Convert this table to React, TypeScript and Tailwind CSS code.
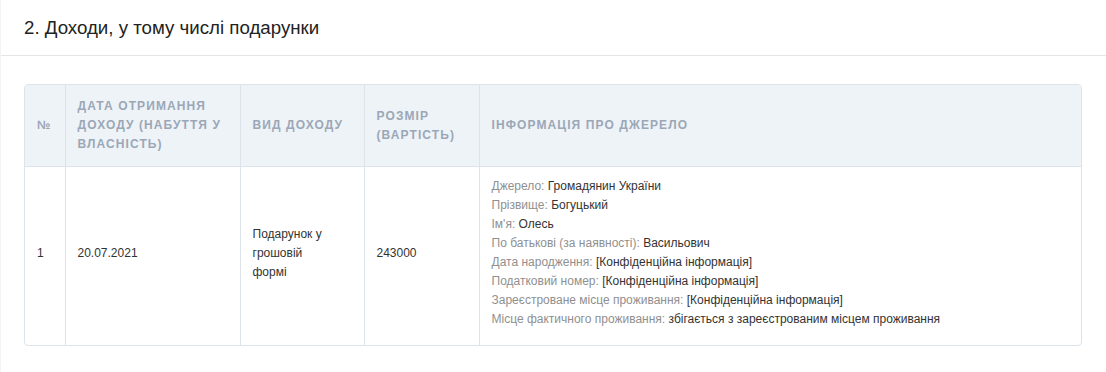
export default function App() {
  const info: [string, string][] = [
    ['Джерело', 'Громадянин України'],
    ['Прізвище', 'Богуцький'],
    ["Ім'я", 'Олесь'],
    ['По батькові (за наявності)', 'Васильович'],
    ['Дата народження', '[Конфіденційна інформація]'],
    ['Податковий номер', '[Конфіденційна інформація]'],
    ['Зареєстроване місце проживання', '[Конфіденційна інформація]'],
    ['Місце фактичного проживання', 'збігається з зареєстрованим місцем проживання'],
  ];

  const th = 'border-l border-[#dde3ea] px-3 pt-[12px] pb-[12px] text-left align-middle font-bold uppercase tracking-[1.1px] text-[12px] leading-[19px] text-[#9ba7b6] first:border-l-0';
  const td = 'border-l border-t border-[#dde3ea] px-3 pt-[10px] pb-[16px] align-middle text-[12px] leading-[19px] text-[#333] first:border-l-0';

  return (
    <div className="min-h-[372px] bg-white font-['Liberation_Sans',Arial,sans-serif] border-l border-[#f3f3f3]">
      <div className="h-[56px] border-b border-[#e6e6e6] pl-[23px] pt-[16px]">
        <h2 className="text-[18.7px] leading-[24px] text-[#222]">2. Доходи, у тому числі подарунки</h2>
      </div>
      <div className="pl-[23px] pr-6 pt-[28px] pb-[26px]">
        <div className="overflow-hidden rounded-[4px] border border-[#dde3ea]">
          <table className="w-full border-collapse">
            <thead className="bg-[#eef3f8]">
              <tr>
                <th className={`${th} w-[40px]`}>№</th>
                <th className={`${th} w-[175px]`}>Дата отримання доходу (набуття у власність)</th>
                <th className={`${th} w-[124px]`}>Вид доходу</th>
                <th className={`${th} w-[115px]`}>Розмір (вартість)</th>
                <th className={th}>Інформація про джерело</th>
              </tr>
            </thead>
            <tbody>
              <tr>
                <td className={td}>1</td>
                <td className={td}>20.07.2021</td>
                <td className={td}>
                  Подарунок у
                  <br />
                  грошовій
                  <br />
                  формі
                </td>
                <td className={td}>243000</td>
                <td className={td}>
                  {info.map(([k, v]) => (
                    <div key={k}>
                      <span className="text-[#8f8f8f]">{k}:</span> {v}
                    </div>
                  ))}
                </td>
              </tr>
            </tbody>
          </table>
        </div>
      </div>
    </div>
  );
}
